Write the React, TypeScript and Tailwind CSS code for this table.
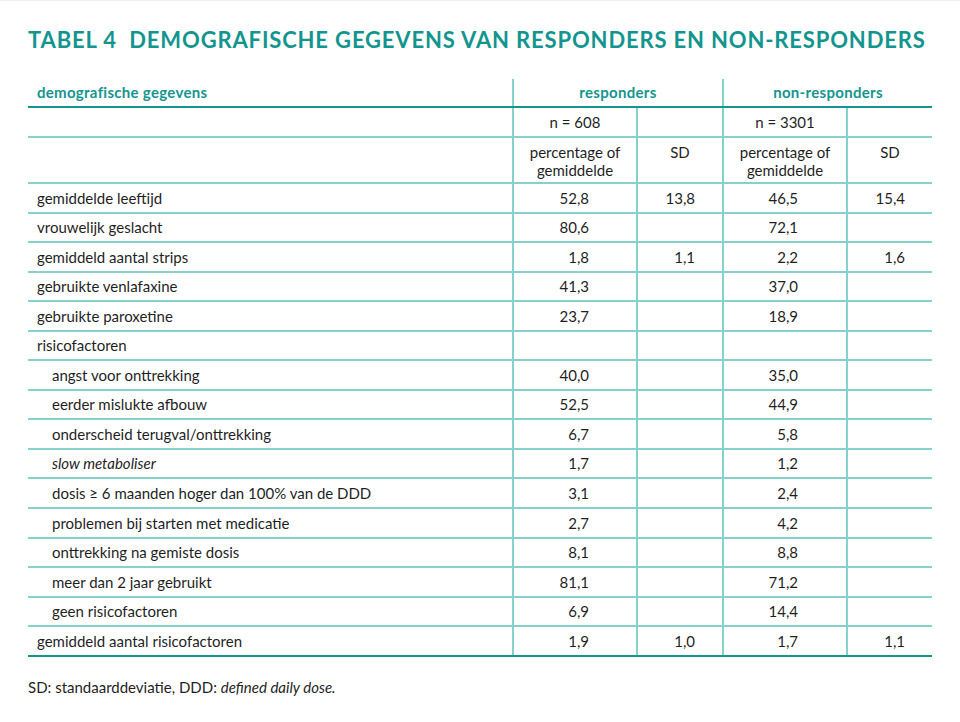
import React from 'react';

type Row = {
  label: string;
  indent?: boolean;
  italic?: boolean;
  r?: string;
  rsd?: string;
  n?: string;
  nsd?: string;
};

const rows: Row[] = [
  { label: 'gemiddelde leeftijd', r: '52,8', rsd: '13,8', n: '46,5', nsd: '15,4' },
  { label: 'vrouwelijk geslacht', r: '80,6', n: '72,1' },
  { label: 'gemiddeld aantal strips', r: '1,8', rsd: '1,1', n: '2,2', nsd: '1,6' },
  { label: 'gebruikte venlafaxine', r: '41,3', n: '37,0' },
  { label: 'gebruikte paroxetine', r: '23,7', n: '18,9' },
  { label: 'risicofactoren' },
  { label: 'angst voor onttrekking', indent: true, r: '40,0', n: '35,0' },
  { label: 'eerder mislukte afbouw', indent: true, r: '52,5', n: '44,9' },
  { label: 'onderscheid terugval/onttrekking', indent: true, r: '6,7', n: '5,8' },
  { label: 'slow metaboliser', indent: true, italic: true, r: '1,7', n: '1,2' },
  { label: 'dosis ≥ 6 maanden hoger dan 100% van de DDD', indent: true, r: '3,1', n: '2,4' },
  { label: 'problemen bij starten met medicatie', indent: true, r: '2,7', n: '4,2' },
  { label: 'onttrekking na gemiste dosis', indent: true, r: '8,1', n: '8,8' },
  { label: 'meer dan 2 jaar gebruikt', indent: true, r: '81,1', n: '71,2' },
  { label: 'geen risicofactoren', indent: true, r: '6,9', n: '14,4' },
  { label: 'gemiddeld aantal risicofactoren', r: '1,9', rsd: '1,0', n: '1,7', nsd: '1,1' },
];

const cols = 'grid grid-cols-[484px_124px_86px_124px_86px]';
const vline = 'border-l-2 border-[#86d1cd]';

export default function App() {
  return (
    <div className="w-[960px] h-[722px] bg-white border-t border-[#eaf0f4] font-['Lato','Open_Sans',sans-serif] text-[#1f1f1f]">
      <div className="px-[28px] pt-[25px]">
        <h1 className="text-[22px] leading-[28px] font-bold tracking-[0.85px] text-[#12958f] whitespace-nowrap">
          TABEL 4&nbsp; DEMOGRAFISCHE GEGEVENS VAN RESPONDERS EN NON-RESPONDERS
        </h1>

        <div className="mt-[25px] w-[904px] text-[15px]">
          <div className={`${cols} h-[29px] border-b-2 border-[#14958f] text-[#14958f] font-bold tracking-[0.3px]`}>
            <div className="pl-[9px] flex items-center">demografische gegevens</div>
            <div className={`col-span-2 ${vline} flex items-center justify-center`}>responders</div>
            <div className={`col-span-2 ${vline} flex items-center justify-center`}>non-responders</div>
          </div>

          <div className={`${cols} h-[30px] border-b-2 border-[#86d1cd]`}>
            <div />
            <div className={`${vline} flex items-center justify-center`}>n = 608</div>
            <div className={vline} />
            <div className={`${vline} flex items-center justify-center`}>n = 3301</div>
            <div className={vline} />
          </div>

          <div className={`${cols} h-[46px] border-b-2 border-[#86d1cd] leading-[18px]`}>
            <div />
            <div className={`${vline} pt-[5px] text-center`}>percentage of<br />gemiddelde</div>
            <div className={`${vline} pt-[5px] text-center`}>SD</div>
            <div className={`${vline} pt-[5px] text-center`}>percentage of<br />gemiddelde</div>
            <div className={`${vline} pt-[5px] text-center`}>SD</div>
          </div>

          {rows.map((row, i) => (
            <div
              key={row.label}
              className={`${cols} h-[29.56px] border-b-2 ${
                i === rows.length - 1 ? 'border-[#14958f]' : 'border-[#86d1cd]'
              }`}
            >
              <div
                className={`flex items-center ${row.indent ? 'pl-[24px]' : 'pl-[9px]'} ${
                  row.italic ? 'italic' : ''
                }`}
              >
                {row.label}
              </div>
              <div className={`${vline} flex items-center justify-end pr-[47px]`}>{row.r}</div>
              <div className={`${vline} flex items-center justify-end pr-[27px]`}>{row.rsd}</div>
              <div className={`${vline} flex items-center justify-end pr-[48px]`}>{row.n}</div>
              <div className={`${vline} flex items-center justify-end pr-[27px]`}>{row.nsd}</div>
            </div>
          ))}
        </div>

        <p className="mt-[19px] text-[15px]">
          SD: standaarddeviatie, DDD: <span className="italic">defined daily dose.</span>
        </p>
      </div>
    </div>
  );
}
